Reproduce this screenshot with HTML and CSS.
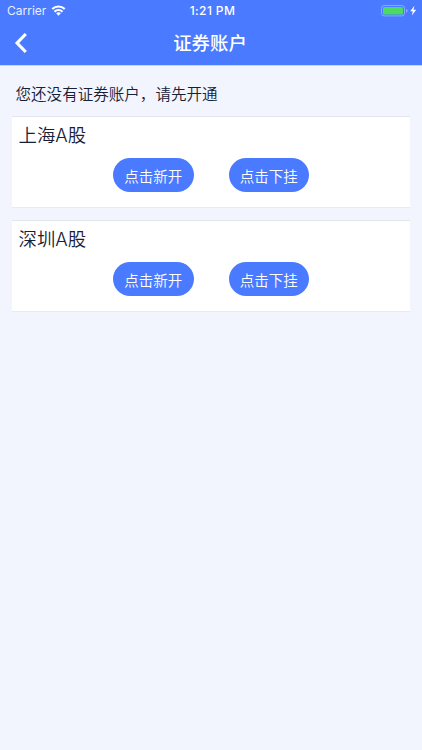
FILE: index.html
```html
<!DOCTYPE html>
<html lang="zh-CN">
<head>
<meta charset="utf-8">
<meta name="viewport" content="width=device-width, initial-scale=1">
<title>证券账户</title>
<link rel="stylesheet" href="styles.css">
</head>
<body>
<header class="top">
  <div class="status">
    <div class="carrier">
      <span>Carrier</span>
      <svg class="wifi" width="15" height="11" viewBox="0 0 16 12" fill="none" stroke="#fff" stroke-width="2.3">
        <path d="M1.2 4.4a9.7 9.7 0 0 1 13.6 0M3.6 7.3a6.2 6.2 0 0 1 8.8 0"/>
        <path d="M5.4 9.1a3.7 3.7 0 0 1 5.2 0L8 11.8z" fill="#fff" stroke="none"/>
      </svg>
    </div>
    <time class="time">1:21 PM</time>
    <div class="power">
      <svg width="36" height="12" viewBox="0 0 36 12">
        <rect x=".5" y=".5" width="23" height="10.4" rx="2.6" fill="none" stroke="#8ba9ff"/>
        <rect x="2" y="2" width="20" height="7.4" rx="1.2" fill="#4cd964"/>
        <path d="M25.2 3.9q1.4.4 1.4 1.8t-1.4 1.8z" fill="#9cb5ff"/>
        <path d="M33.4.8l-4.2 5.4h2.6l-1 4.3 4.4-5.7h-2.7z" fill="#fff"/>
      </svg>
    </div>
  </div>
  <nav class="nav">
    <svg class="back" width="14" height="22" viewBox="0 0 14 22" fill="none" stroke="#fff" stroke-width="3.2">
      <path d="M11.8 2L3.1 11l8.7 9"/>
    </svg>
    <h1 class="title">证券账户</h1>
  </nav>
</header>
<main class="content">
  <p class="notice">您还没有证券账户，请先开通</p>
  <section class="card">
    <h2 class="market">上海A股</h2>
    <div class="actions">
      <button class="action">点击新开</button>
      <button class="action">点击下挂</button>
    </div>
  </section>
  <section class="card">
    <h2 class="market">深圳A股</h2>
    <div class="actions">
      <button class="action">点击新开</button>
      <button class="action">点击下挂</button>
    </div>
  </section>
</main>
</body>
</html>
```

FILE: styles.css
```css
* { box-sizing: border-box; }
body {
  margin: 0;
  min-height: 750px;
  background: #f2f5fd;
  color: #172037;
  font-family: "Noto Sans CJK SC", sans-serif;
}
h1, h2, p { margin: 0; font-weight: 350; }
.top {
  height: 66px;
  border-bottom: 1px solid #c4d3fd;
  background: #4a7aff;
  color: #fff;
}
.status {
  display: grid;
  grid-template-columns: 1fr auto 1fr;
  height: 22px;
  padding: 0 5px 0 7px;
  font: 12px/22px Inter, sans-serif;
}
.carrier { display: flex; gap: 5px; color: #e9efff; }
.wifi { margin-top: 5px; }
.time { padding-left: 1px; font-weight: 500; letter-spacing: .4px; }
.power { display: flex; justify-content: flex-end; padding-top: 5px; }
.nav {
  display: grid;
  grid-template-columns: 1fr auto 1fr;
  align-items: center;
  height: 42px;
  padding: 0 16px 0 14px;
}
.title {
  padding-bottom: 2px;
  font-size: 18.4px;
  line-height: 28px;
  font-weight: 500;
}
.content { padding: 12px 12px 0; }
.notice {
  height: 38px;
  padding-left: 3.5px;
  font-size: 15.55px;
  line-height: 31px;
}
.card {
  height: 92px;
  margin-bottom: 12px;
  border-top: 1px solid #e3e6ed;
  border-bottom: 1px solid #e7eaf2;
  background: #fff;
}
.market {
  height: 41px;
  padding-left: 6.5px;
  font-family: Inter, "Noto Sans CJK SC", sans-serif;
  font-size: 18.4px;
  line-height: 36px;
}
.actions { display: flex; justify-content: center; gap: 35px; }
.action {
  width: 80.5px;
  height: 34px;
  padding: 1px 0 0;
  border: 0;
  border-radius: 17px;
  background: #4a7aff;
  color: #fff;
  font: 350 14.5px/30px "Noto Sans CJK SC", sans-serif;
}
```
